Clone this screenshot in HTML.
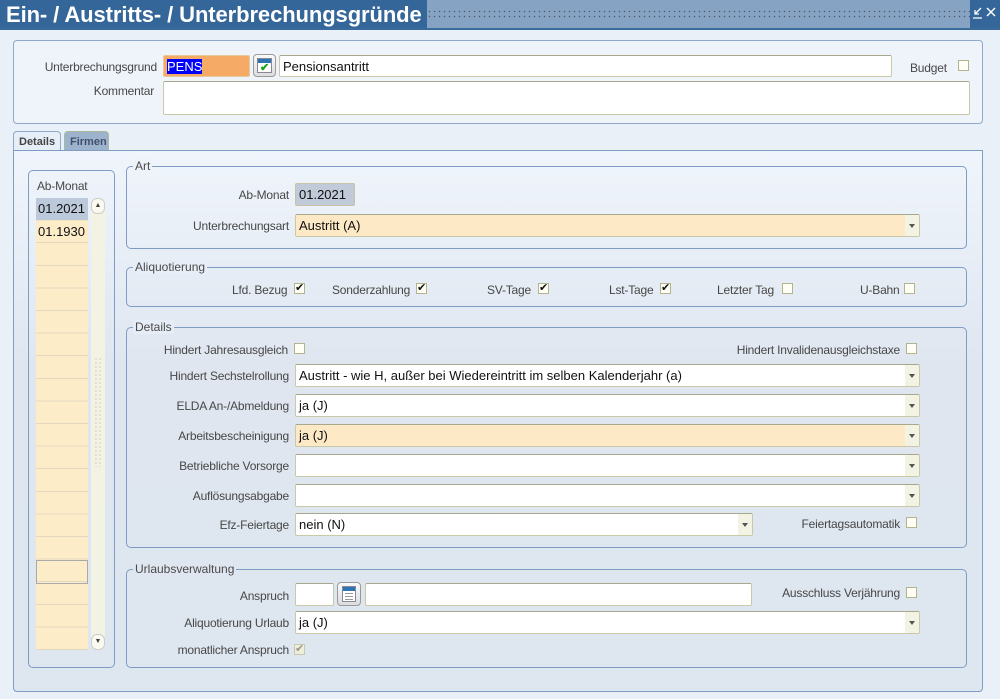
<!DOCTYPE html>
<html><head><meta charset="utf-8"><style>
*{box-sizing:border-box;margin:0;padding:0}
body{width:1000px;height:699px;position:relative;overflow:hidden;background:#eaf0f8;font-family:"Liberation Sans",sans-serif;font-size:12px;color:#4a4a4a}
.a{position:absolute}
.lbl{position:absolute;text-align:right;white-space:nowrap;font-size:12px;color:#474747;letter-spacing:-0.2px}
.inp{position:absolute;background:#fff;border:1px solid #c9c9a8;border-top-color:#a7a88e;border-radius:2px;font-size:13px;color:#111;padding:3px 0 0 3px;white-space:nowrap}
.dd::after{content:"";position:absolute;right:0;top:0;bottom:0;width:14px;background:#f3f3e3}
.dd::before{content:"";position:absolute;right:4px;top:9px;border-left:3px solid transparent;border-right:3px solid transparent;border-top:4px solid #555;z-index:2}
.grp{position:absolute;border:1px solid #7e9cc4;border-radius:5px}
.leg{position:absolute;top:-8px;left:6px;background:#e6edf6;padding:0 2px;font-size:12px;color:#4a4a4a}
.cb{position:absolute;width:11px;height:11px;border:1px solid #b3b38e;background:#fffff5}
.ck::after{content:"✔";position:absolute;left:0px;top:-3px;font-size:11px;color:#111}
.cell{position:absolute;left:36px;width:52px;height:23px;font-size:13px;color:#111;padding:3px 0 0 2px}
</style></head><body>
<!-- title -->
<div class="a" style="left:0;top:0;width:1000px;height:29px;background:#346699"></div>
<div class="a" style="left:427px;top:0;width:543px;height:28px;background:#87a3c4"></div>
<div class="a" style="left:427px;top:9px;width:543px;height:10px;background-image:radial-gradient(#4a5868 0.6px,transparent 0.9px);background-size:5px 5px"></div>
<div class="a" style="left:6px;top:2px;color:#fff;font-weight:bold;font-size:22px;white-space:nowrap;letter-spacing:-0.1px">Ein- / Austritts- / Unterbrechungsgründe</div>
<svg class="a" style="left:972px;top:6px" width="12" height="14"><path d="M9 2 L3 8 M3 4 L3 8 L7 8 M1 12 H10" stroke="#fff" stroke-width="1.3" fill="none"/></svg>
<svg class="a" style="left:986px;top:7px" width="10" height="10"><path d="M1 1 L9 9 M9 1 L1 9" stroke="#fff" stroke-width="1.5"/></svg>
<div class="a" style="left:0;top:28px;width:1000px;height:2px;background:#3a6a9c"></div>

<!-- top panel -->
<div class="a" style="left:13px;top:40px;width:970px;height:84px;border:1px solid #8ea9c9;border-radius:4px;background:#eff4fb"></div>
<div class="lbl" style="right:843px;top:60px">Unterbrechungsgrund</div>
<div class="inp" style="left:163px;top:55px;width:87px;height:22px;background:#f5ab66;border-color:#e6c79e"><span style="background:#0000ff;color:#fff">PENS</span></div>
<div class="a" style="left:253px;top:54px;width:23px;height:23px;border:1px solid #9a9a9a;border-radius:4px;background:linear-gradient(#fafafa,#ddd)">
<div class="a" style="left:3px;top:3px;width:15px;height:15px;background:#fff;border:1px solid #889"><div style="height:4px;background:#2e74b5"></div><div style="color:#1aa01a;font-size:11px;font-weight:bold;line-height:10px;padding-left:2px">✔</div></div></div>
<div class="inp" style="left:279px;top:55px;width:613px;height:22px">Pensionsantritt</div>
<div class="lbl" style="left:910px;top:61px">Budget</div>
<div class="cb" style="left:958px;top:60px"></div>
<div class="lbl" style="right:846px;top:84px">Kommentar</div>
<div class="inp" style="left:163px;top:81px;width:807px;height:34px"></div>

<!-- tabs -->
<div class="a" style="left:13px;top:131px;width:48px;height:20px;background:#e6eef8;border:1px solid #8ea9c9;border-bottom:none;border-radius:4px 4px 0 0;font-weight:bold;font-size:11px;color:#444;padding:4px 0 0 5px">Details</div>
<div class="a" style="left:64px;top:131px;width:45px;height:19px;background:#9db3cd;border:1px solid #a9b99a;border-bottom:none;border-radius:4px 4px 0 0;font-weight:bold;font-size:11px;color:#40506a;padding:4px 0 0 5px">Firmen</div>
<div class="a" style="left:13px;top:150px;width:970px;height:542px;border:1px solid #7e9cc4;border-radius:0 0 4px 4px;background:linear-gradient(#f0f5fc,#dfe6f0 40%,#dee6f0)"></div>

<!-- left list -->
<div class="grp" style="left:28px;top:170px;width:87px;height:498px"></div>
<div class="lbl" style="left:37px;top:179px">Ab-Monat</div>
<div class="a" style="left:91px;top:198px;width:14px;height:452px;background:#f3f3e4;border-radius:6px"></div>
<div class="a" style="left:91px;top:198px;width:14px;height:16px;background:#fafaf0;border:1px solid #ccc;border-radius:6px;font-size:7px;text-align:center;line-height:13px;color:#444">▲</div>
<div class="a" style="left:91px;top:634px;width:14px;height:16px;background:#fafaf0;border:1px solid #ccc;border-radius:6px;font-size:7px;text-align:center;line-height:14px;color:#444">▼</div>
<div class="a" style="left:94px;top:357px;width:8px;height:110px;background-image:radial-gradient(#aaa 0.5px,transparent 0.8px);background-size:4px 4px"></div>
<div class="a" style="left:36px;top:198px;width:52px;height:452px;background:repeating-linear-gradient(#fdecc8 0,#fdecc8 21.6px,#e2d8c2 21.6px,#e2d8c2 22.6px)"></div>
<div class="a" style="left:36px;top:198px;width:52px;height:22px;background:#bcc9da"></div>
<div class="a" style="left:36px;top:560px;width:52px;height:24px;border:1px solid #aaa"></div>
<div class="cell" style="top:198px">01.2021</div>
<div class="cell" style="top:221px">01.1930</div>

<!-- Art -->
<div class="grp" style="left:126px;top:166px;width:841px;height:83px"><div class="leg" style="background:#eef3fa">Art</div></div>
<div class="lbl" style="right:711px;top:188px">Ab-Monat</div>
<div class="inp" style="left:295px;top:183px;width:60px;height:23px;background:#c0cad8;border-color:#c8c3a2">01.2021</div>
<div class="lbl" style="right:711px;top:219px">Unterbrechungsart</div>
<div class="inp dd" style="left:295px;top:214px;width:625px;height:23px;background:#fde9c6">Austritt (A)</div>

<!-- Aliquotierung -->
<div class="grp" style="left:126px;top:267px;width:841px;height:40px"><div class="leg" style="background:#e8eef7">Aliquotierung</div></div>
<div class="lbl" style="left:232px;top:283px">Lfd. Bezug</div><div class="cb ck" style="left:294px;top:283px"></div>
<div class="lbl" style="left:332px;top:283px">Sonderzahlung</div><div class="cb ck" style="left:416px;top:283px"></div>
<div class="lbl" style="left:487px;top:283px">SV-Tage</div><div class="cb ck" style="left:538px;top:283px"></div>
<div class="lbl" style="left:609px;top:283px">Lst-Tage</div><div class="cb ck" style="left:660px;top:283px"></div>
<div class="lbl" style="left:717px;top:283px">Letzter Tag</div><div class="cb" style="left:782px;top:283px"></div>
<div class="lbl" style="left:860px;top:283px">U-Bahn</div><div class="cb" style="left:904px;top:283px"></div>

<!-- Details -->
<div class="grp" style="left:126px;top:327px;width:841px;height:221px"><div class="leg" style="background:#e6edf6">Details</div></div>
<div class="lbl" style="right:712px;top:343px">Hindert Jahresausgleich</div><div class="cb" style="left:294px;top:343px"></div>
<div class="lbl" style="right:100px;top:343px">Hindert Invalidenausgleichstaxe</div><div class="cb" style="left:906px;top:343px"></div>
<div class="lbl" style="right:711px;top:369px">Hindert Sechstelrollung</div>
<div class="inp dd" style="left:295px;top:364px;width:625px;height:23px">Austritt - wie H, außer bei Wiedereintritt im selben Kalenderjahr (a)</div>
<div class="lbl" style="right:711px;top:399px">ELDA An-/Abmeldung</div>
<div class="inp dd" style="left:295px;top:394px;width:625px;height:23px">ja (J)</div>
<div class="lbl" style="right:711px;top:429px">Arbeitsbescheinigung</div>
<div class="inp dd" style="left:295px;top:424px;width:625px;height:23px;background:#fde9c6">ja (J)</div>
<div class="lbl" style="right:711px;top:459px">Betriebliche Vorsorge</div>
<div class="inp dd" style="left:295px;top:454px;width:625px;height:23px"></div>
<div class="lbl" style="right:711px;top:489px">Auflösungsabgabe</div>
<div class="inp dd" style="left:295px;top:484px;width:625px;height:23px"></div>
<div class="lbl" style="right:711px;top:518px">Efz-Feiertage</div>
<div class="inp dd" style="left:295px;top:513px;width:458px;height:23px">nein (N)</div>
<div class="lbl" style="right:100px;top:517px">Feiertagsautomatik</div><div class="cb" style="left:906px;top:517px"></div>

<!-- Urlaub -->
<div class="grp" style="left:126px;top:569px;width:841px;height:99px"><div class="leg" style="background:#dfe6f0">Urlaubsverwaltung</div></div>
<div class="lbl" style="right:711px;top:589px">Anspruch</div>
<div class="inp" style="left:295px;top:583px;width:39px;height:23px"></div>
<div class="a" style="left:337px;top:582px;width:24px;height:24px;border:1px solid #9a9a9a;border-radius:4px;background:linear-gradient(#fafafa,#ddd)">
<div class="a" style="left:4px;top:3px;width:14px;height:16px;background:#fff;border:1px solid #889"><div style="height:4px;background:#2e74b5"></div><div style="margin:2px 2px;height:1px;background:#999"></div><div style="margin:2px 2px;height:1px;background:#999"></div><div style="margin:2px 2px;height:1px;background:#999"></div></div></div>
<div class="inp" style="left:365px;top:583px;width:387px;height:23px"></div>
<div class="lbl" style="right:100px;top:586px">Ausschluss Verjährung</div><div class="cb" style="left:906px;top:587px"></div>
<div class="lbl" style="right:711px;top:616px">Aliquotierung Urlaub</div>
<div class="inp dd" style="left:295px;top:611px;width:625px;height:23px">ja (J)</div>
<div class="lbl" style="right:711px;top:643px">monatlicher Anspruch</div>
<div class="cb" style="left:294px;top:644px;border-color:#c8c8b0;background:#eeeedd"><span style="position:absolute;left:0;top:-3px;font-size:11px;color:#9a9a8a">✔</span></div>
</body></html>
